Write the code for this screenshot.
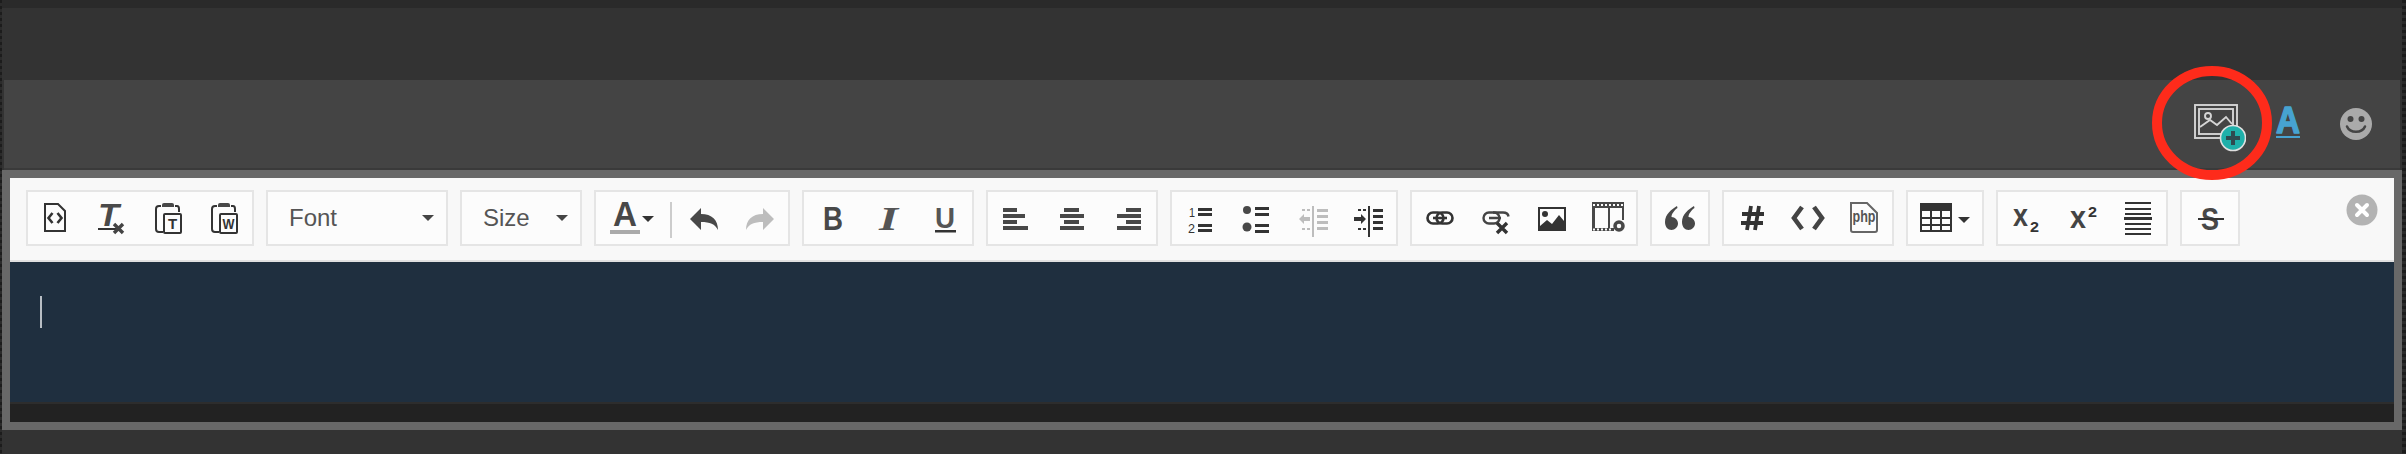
<div class="page">
  <div class="strip"></div>
  <div class="top"></div>
  <div class="panel">
    <svg class="ico-image" width="52" height="48" viewBox="0 0 52 48">
      <rect class="ln-lt" x="1" y="1" width="42" height="33" />
      <rect class="ln-lt" x="5" y="5" width="34" height="25" />
      <circle class="ln-lt" cx="14" cy="12" r="3" />
      <polyline class="ln-lt" points="6,23 16,16 23,21 32,13 38,20" />
      <circle class="teal" cx="39" cy="34" r="12.5" />
      <path class="plus" d="M39 27v14M32 34h14" />
    </svg>
    <svg class="ico-a" width="30" height="48" viewBox="0 0 30 48">
      <text class="a-blue" x="15" y="35" text-anchor="middle" textLength="24" lengthAdjust="spacingAndGlyphs">A</text>
      <rect class="fill-blue" x="3" y="38" width="24" height="2" />
    </svg>
    <svg class="ico-smile" width="32" height="48" viewBox="0 0 32 48">
      <circle class="fill-smile" cx="16" cy="18" r="16" />
      <circle class="fill-panel" cx="10.5" cy="13" r="3" />
      <circle class="fill-panel" cx="21.5" cy="13" r="3" />
      <path class="smile-mouth" d="M7 20.5c3 7 15 7 18 0" />
    </svg>
  </div>
  <div class="frame">
    <div class="toolbar">
      <div class="group">
        <svg class="b" viewBox="0 0 56 52">
          <path class="ln" d="M17 12h13l7 7v20H17z" />
          <path class="ln2" d="M24.500 21l-4 5 4 5M29.500 21l4 5-4 5" />
        </svg>
        <svg class="b" viewBox="0 0 56 52">
          <text class="t-tx" x="14" y="34" textLength="21" lengthAdjust="spacingAndGlyphs">T</text>
          <rect class="fd" x="14" y="36" width="20" height="2" />
          <path class="ln3" d="M30 32l9 9M39 32l-9 9" />
        </svg>
        <svg class="b" viewBox="0 0 56 52">
          <path class="ln" d="M21 14h-2q-3 0-3 3v20q0 3 3 3h4M35 14h2q2 0 2 3v3" />
          <path class="fg" d="M22 15v-2q0-2 2-2h8q2 0 2 2v2z" />
          <rect class="ln" x="24" y="22" width="17" height="19" rx="1" />
          <text class="t-small" x="32.5" y="37" text-anchor="middle">T</text>
        </svg>
        <svg class="b" viewBox="0 0 56 52">
          <path class="ln" d="M21 14h-2q-3 0-3 3v20q0 3 3 3h4M35 14h2q2 0 2 3v3" />
          <path class="fg" d="M22 15v-2q0-2 2-2h8q2 0 2 2v2z" />
          <rect class="ln" x="24" y="22" width="17" height="19" rx="1" />
          <text class="t-small" x="32.5" y="37" text-anchor="middle" textLength="12" lengthAdjust="spacingAndGlyphs">W</text>
        </svg>
      </div>

      <div class="group select font"><span>Font</span><i class="caret"></i></div>
      <div class="group select size"><span>Size</span><i class="caret"></i></div>

      <div class="group color">
        <svg class="c-a" viewBox="0 0 74 52">
          <text class="t-a" x="29" y="34" text-anchor="middle" textLength="24" lengthAdjust="spacingAndGlyphs">A</text>
          <rect class="fgrey" x="14" y="38" width="30" height="4" />
          <path class="fd" d="M46 24h12l-6 6z" />
        </svg>
        <div class="sep"></div>
        <svg class="c-u" viewBox="0 0 58 52">
          <path class="fg" d="M18 27l11-11v6c11 0 17 6 17 16-3-6-8-8-17-8v8z" />
        </svg>
        <svg class="c-u" viewBox="0 0 58 52">
          <path class="flt" d="M44 27l-11-11v6c-11 0-17 6-17 16 3-6 8-8 17-8v8z" />
        </svg>
      </div>

      <div class="group">
        <svg class="b" viewBox="0 0 56 52"><text class="t-b" x="19" y="38" textLength="20" lengthAdjust="spacingAndGlyphs">B</text></svg>
        <svg class="b" viewBox="0 0 56 52"><text class="t-i" x="19" y="38" textLength="19" lengthAdjust="spacingAndGlyphs">I</text></svg>
        <svg class="b" viewBox="0 0 56 52">
          <text class="t-u" x="19" y="36" textLength="20" lengthAdjust="spacingAndGlyphs">U</text>
          <rect class="fd" x="19" y="38" width="21" height="2.5" />
        </svg>
      </div>

      <div class="group">
        <svg class="b" viewBox="0 0 56 52"><path class="fg" d="M15 16h14v4H15zM15 22h22v4H15zM15 28h14v4H15zM15 34h25v4H15z" /></svg>
        <svg class="b" viewBox="0 0 56 52"><path class="fg" d="M20 16h15v4H20zM16 22h24v4H16zM20 28h15v4H20zM16 34h24v4H16z" /></svg>
        <svg class="b" viewBox="0 0 56 52"><path class="fg" d="M26 16h15v4H26zM17 22h24v4H17zM26 28h15v4H26zM17 34h24v4H17z" /></svg>
      </div>

      <div class="group">
        <svg class="b" viewBox="0 0 56 52">
          <text class="t-num" x="17" y="25" textLength="6" lengthAdjust="spacingAndGlyphs">1</text>
          <text class="t-num" x="16" y="41" textLength="7" lengthAdjust="spacingAndGlyphs">2</text>
          <path class="fd" d="M26 16h14v3H26zM26 21h14v3H26zM26 32h14v3H26zM26 37h14v3H26z" />
        </svg>
        <svg class="b" viewBox="0 0 56 52">
          <circle class="fg" cx="19" cy="18" r="4" />
          <circle class="fg" cx="19" cy="35" r="4.500" />
          <path class="fd" d="M27 15h14v3H27zM27 21h14v3H27zM27 32h14v3H27zM27 38h14v3H27z" />
        </svg>
        <svg class="b" viewBox="0 0 56 52">
          <path class="flt" d="M28 14h2v31h-2zM33 17h11v3H33zM33 23h11v3H33zM33 29h11v3H33zM33 35h11v3H33zM15 27l5-5v3h6v4h-6v3zM18 17h3v2h-3zM23 17h3v2h-3zM18 36h3v2h-3zM23 36h3v2h-3z" />
        </svg>
        <svg class="b" viewBox="0 0 56 52">
          <path class="fd" d="M28 14h2v31h-2zM33 17h10v3H33zM33 23h10v3H33zM33 29h10v3H33zM33 35h10v3H33zM26 27l-5-5v3h-7v4h7v3zM18 17h3v2h-3zM23 17h3v2h-3zM18 36h3v2h-3zM23 36h3v2h-3z" />
        </svg>
      </div>

      <div class="group">
        <svg class="b" viewBox="0 0 56 52">
          <rect class="ln-chain" x="15.500" y="20.500" width="16" height="11" rx="5.500" />
          <rect class="ln-chain" x="24.500" y="20.500" width="16" height="11" rx="5.500" />
          <path class="ln-chain" d="M21 26h14" />
        </svg>
        <svg class="b" viewBox="0 0 56 52">
          <rect class="ln-chain2" x="15.500" y="20.500" width="16" height="11" rx="5.500" />
          <path class="ln-chain2" d="M25 20.500h10q5 0 5.500 4M21 26h12" />
          <path class="ln-x" d="M29 31l10 10M39 31l-10 10" />
        </svg>
        <svg class="b" viewBox="0 0 56 52">
          <path class="fd" fill-rule="evenodd" d="M14 15h28v24H14zM16 17v17l7-6 5 4 7-9 5 6V17z" />
          <circle class="fd" cx="21" cy="22" r="3" />
        </svg>
        <svg class="b" viewBox="0 0 56 52">
          <path class="fg" fill-rule="evenodd" d="M12 10h32v18h-2V16H30v20h4v3H12zM15 16v20h13V16z" />
          <path class="film" d="M13 13h30M13 37.500h20" />
          <circle class="ring" cx="39" cy="34" r="4" />
        </svg>
      </div>

      <div class="group">
        <svg class="b" viewBox="0 0 56 52">
          <path class="fg" d="M25 14c-5 3-12 8-12 16 0 5 3 8 6.500 8s6.500-3 6.500-6.500-3-6.500-6.500-6.500c0-3 3-7 6-9zM42 14c-5 3-12 8-12 16 0 5 3 8 6.500 8s6.500-3 6.500-6.500-3-6.500-6.500-6.500c0-3 3-7 6-9z" />
        </svg>
      </div>

      <div class="group">
        <svg class="b" viewBox="0 0 56 52"><path class="ln-hash" d="M27 14l-4 24M35 14l-4 24M18 22h22M17 31h22" /></svg>
        <svg class="b" viewBox="0 0 56 52"><path class="ln-code" d="M22 15L14 26l8 11M34 15l8 11-8 11" /></svg>
        <svg class="b" viewBox="0 0 56 52">
          <path class="ln-php" d="M15 11h16l10 10v17q0 2-2 2H17q-2 0-2-2z" />
          <text class="t-php" x="28" y="30" text-anchor="middle" textLength="23" lengthAdjust="spacingAndGlyphs">php</text>
        </svg>
      </div>

      <div class="group">
        <svg class="tbl" viewBox="0 0 74 52">
          <path class="fd" fill-rule="evenodd" d="M12 11h32v29H12zM14 19v6h8v-6zM24 19v6h8v-6zM34 19v6h8v-6zM14 27v5h8v-5zM24 27v5h8v-5zM34 27v5h8v-5zM14 34v4h8v-4zM24 34v4h8v-4zM34 34v4h8v-4z" />
          <path class="fd" d="M50 25h12l-6 6z" />
        </svg>
      </div>

      <div class="group">
        <svg class="b" viewBox="0 0 56 52">
          <text class="t-x" x="15" y="34" textLength="15" lengthAdjust="spacingAndGlyphs">x</text>
          <text class="t-sup" x="32" y="40" textLength="9" lengthAdjust="spacingAndGlyphs">2</text>
        </svg>
        <svg class="b" viewBox="0 0 56 52">
          <text class="t-x" x="16" y="36" textLength="16" lengthAdjust="spacingAndGlyphs">x</text>
          <text class="t-sup" x="34" y="25" textLength="9" lengthAdjust="spacingAndGlyphs">2</text>
        </svg>
        <svg class="b" viewBox="0 0 56 52">
          <path class="fd" d="M15 10h26v2H15zM15 16h26v2H15zM15 21h26v2H15zM14 25h28v3H14zM15 31h26v2H15zM15 36h26v2H15zM15 41h26v2H15z" />
        </svg>
      </div>

      <div class="group">
        <svg class="b" viewBox="0 0 56 52">
          <text class="t-s" x="19" y="38" textLength="18" lengthAdjust="spacingAndGlyphs">S</text>
          <rect class="fd" x="16" y="26" width="26" height="2" />
        </svg>
      </div>

      <svg class="close" viewBox="0 0 32 32">
        <circle class="fill-close" cx="16" cy="16" r="15.500" />
        <path class="ln-close" d="M11 11l10 10M21 11L11 21" />
      </svg>
    </div>
    <div class="editor"><div class="cursor"></div></div>
    <div class="foot"></div>
  </div>
  <div class="bottom"></div>
  <svg class="ring-mark" width="122" height="114" viewBox="0 0 122 114">
    <ellipse cx="61" cy="57" rx="55" ry="52" />
  </svg>
</div>

<style>
  :global(body) {
    margin: 0;
    background: repeating-linear-gradient(180deg, #1c1c1c 0 3px, #2b2b2b 3px 6px);
  }
  .page {
    position: relative;
    width: 2400px;
    height: 454px;
    margin-left: 2px;
    background: #333;
    overflow: hidden;
    font-family: "Liberation Sans", sans-serif;
  }
  .strip { height: 8px; background: #2a2a2a; }
  .top { height: 72px; background: #333; }
  .panel {
    display: flex;
    align-items: flex-start;
    justify-content: flex-end;
    box-sizing: border-box;
    height: 90px;
    margin-left: 2px;
    margin-right: 2px;
    padding: 24px 28px 0 0;
    background: #444;
    border-bottom: 2px solid #3a3a3a;
  }
  .panel svg { display: block; }
  .ico-image { margin-right: 27px; }
  .ico-a { margin: -6px 37px 0 0; }
  .ico-smile { margin-top: 2px; }
  .ln-lt { fill: none; stroke: #d4d4d4; stroke-width: 1.9; }
  .teal { fill: #1fb0aa; stroke: #e0e0e0; stroke-width: 1.6; }
  .plus { fill: none; stroke: #2f4a50; stroke-width: 4; }
  .a-blue {
    font: 700 37px "Liberation Sans", sans-serif;
    fill: #47a3d1;
    stroke: #47a3d1;
    stroke-width: 1.5;
    stroke-linejoin: round;
  }
  .fill-blue { fill: #47a3d1; }
  .fill-smile { fill: #aaa; }
  .fill-panel { fill: #444; }
  .smile-mouth { fill: none; stroke: #444; stroke-width: 2.5; stroke-linecap: round; }

  .frame {
    box-sizing: border-box;
    height: 260px;
    padding: 8px;
    background: #686868;
    display: flex;
    flex-direction: column;
  }
  .toolbar {
    box-sizing: border-box;
    display: flex;
    align-items: flex-start;
    gap: 12px;
    height: 84px;
    padding: 12px 16px 14px;
    background: #f8f8f8;
    border-bottom: 2px solid #e0e0e0;
  }
  .group {
    box-sizing: border-box;
    display: flex;
    align-items: stretch;
    height: 56px;
    border: 2px solid #e5e5e5;
    background: #fcfcfc;
  }
  .b { width: 56px; height: 52px; display: block; }
  .c-a { width: 74px; height: 52px; display: block; }
  .c-u { width: 58px; height: 52px; display: block; }
  .tbl { width: 74px; height: 52px; display: block; }
  .sep { width: 2px; height: 36px; margin-top: 10px; background: #ccc; }
  .select {
    align-items: center;
    justify-content: space-between;
    padding: 0 12px 0 21px;
    font-size: 24px;
    color: #555;
  }
  .font { width: 182px; }
  .size { width: 122px; }
  .caret {
    width: 0;
    height: 0;
    border-left: 6px solid transparent;
    border-right: 6px solid transparent;
    border-top: 6px solid #444;
  }
  .ln { fill: none; stroke: #333; stroke-width: 2; }
  .ln2 { fill: none; stroke: #333; stroke-width: 2.6; }
  .ln3 { fill: none; stroke: #444; stroke-width: 3.4; }
  .fd { fill: #333; }
  .fg { fill: #484848; }
  .flt { fill: #bdbdbd; }
  .fgrey { fill: #aaa; }
  .t-tx { font: italic 700 31px "Liberation Sans", sans-serif; fill: #4a4a4a; }
  .t-small { font: 700 15px "Liberation Sans", sans-serif; fill: #333; }
  .t-a { font: 700 35px "Liberation Sans", sans-serif; fill: #484848; }
  .t-b { font: 700 33px "Liberation Sans", sans-serif; fill: #484848; }
  .t-i { font: italic 700 33px "Liberation Serif", serif; fill: #555; }
  .t-u { font: 700 30px "Liberation Sans", sans-serif; fill: #555; }
  .t-num { font: 400 13px "Liberation Sans", sans-serif; fill: #333; }
  .t-php { font: 700 17px "Liberation Sans", sans-serif; fill: #555; }
  .t-x { font: 700 31px "Liberation Sans", sans-serif; fill: #444; }
  .t-sup { font: 700 14px "Liberation Sans", sans-serif; fill: #333; }
  .t-s { font: 700 32px "Liberation Sans", sans-serif; fill: #484848; }
  .ln-chain { fill: none; stroke: #333; stroke-width: 2.6; }
  .ln-chain2 { fill: none; stroke: #444; stroke-width: 2.4; }
  .ln-x { fill: none; stroke: #333; stroke-width: 3.4; }
  .film { fill: none; stroke: #fcfcfc; stroke-width: 2; stroke-dasharray: 2 2; }
  .ring { fill: #fcfcfc; stroke: #484848; stroke-width: 3.5; }
  .ln-hash { fill: none; stroke: #333; stroke-width: 3.8; }
  .ln-code { fill: none; stroke: #444; stroke-width: 4.6; }
  .ln-php { fill: none; stroke: #666; stroke-width: 2; }
  .close { width: 32px; height: 32px; margin: 4px 0 0 auto; display: block; }
  .fill-close { fill: #b3b3b3; }
  .ln-close { fill: none; stroke: #fff; stroke-width: 4; stroke-linecap: round; }

  .editor {
    box-sizing: border-box;
    height: 140px;
    padding: 34px 0 0 30px;
    background: #1f2f3f;
  }
  .cursor { width: 2px; height: 32px; background: #b8bec4; }
  .foot {
    box-sizing: border-box;
    height: 20px;
    background: #222;
    border-top: 2px solid #2d2d2d;
  }
  .bottom { height: 24px; background: #333; }
  .ring-mark { position: absolute; left: 2149px; top: 66px; }
  .ring-mark ellipse { fill: none; stroke: #fe2b1b; stroke-width: 10; }
</style>
